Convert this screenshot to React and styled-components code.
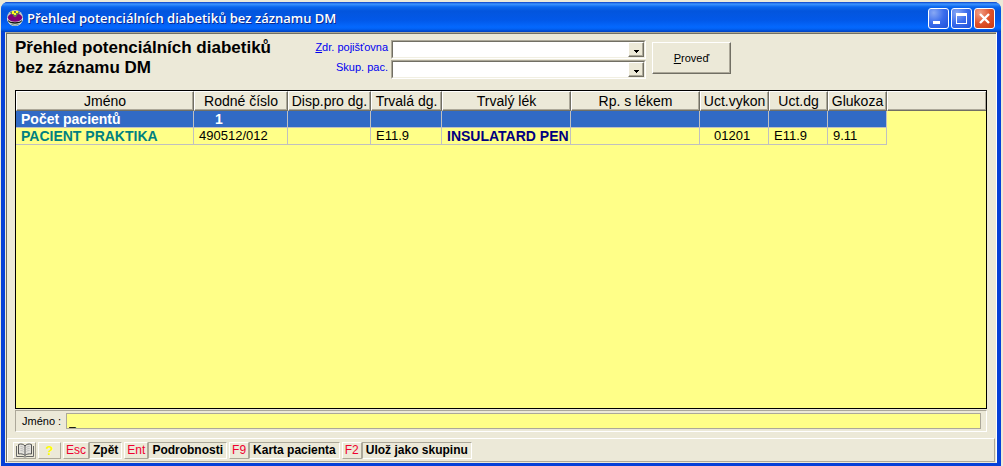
import React, { useState } from "react";
import styled, { createGlobalStyle } from "styled-components";

const columns = [
  { key: "name", label: "Jméno", width: 178 },
  { key: "birthNo", label: "Rodné číslo", width: 94 },
  { key: "disp", label: "Disp.pro dg.", width: 83 },
  { key: "permDg", label: "Trvalá dg.", width: 71 },
  { key: "drug", label: "Trvalý lék", width: 129 },
  { key: "rx", label: "Rp. s lékem", width: 129 },
  { key: "billCode", label: "Uct.vykon", width: 69 },
  { key: "billDg", label: "Uct.dg", width: 59 },
  { key: "glucose", label: "Glukoza", width: 59 },
];

const patients = [
  {
    name: "PACIENT PRAKTIKA",
    birthNo: "490512/012",
    permDg: "E11.9",
    drug: "INSULATARD PEN",
    billCode: "01201",
    billDg: "E11.9",
    glucose: "9.11",
  },
];

const cellColors = { name: "#008080", drug: "#000080" };

const shortcuts = [
  { keyName: "Esc", label: "Zpět" },
  { keyName: "Ent", label: "Podrobnosti" },
  { keyName: "F9", label: "Karta pacienta" },
  { keyName: "F2", label: "Ulož jako skupinu" },
];

function AppIcon() {
  return (
    <svg width="16" height="16" viewBox="0 0 16 16" aria-hidden="true">
      <circle cx="8" cy="8" r="8" fill="#c4ccc8" />
      <path d="M0 8a8 8 0 0 0 16 0z" fill="#e4e8e4" />
      <path d="M1 10c2 3 12 3 14 0v1c-2 3.500-12 3.500-14 0z" fill="#101810" />
      <path d="M3 13.500c3 1.500 7 1.500 10 0l-2 1.500c-2 .8-4 .8-6 0z" fill="#608078" />
      <ellipse cx="8" cy="7.500" rx="7.200" ry="4.300" fill="#800078" />
      <path d="M3 2l3-1h4l3 1-1 2-2 1-1 2H7L6 5 4 4z" fill="#687858" />
      <path d="M5 1h2v2h2V1h2v2H9v2H7V4H5z" fill="#ffff20" />
    </svg>
  );
}

function BookIcon() {
  return (
    <svg width="18" height="15" viewBox="0 0 18 15" fill="none" aria-hidden="true">
      <path d="M2.500 1.500C5 .5 7.500 1 9 3c1.500-2 4-2.500 6.500-1.500V11C13 10.500 10.500 11 9 12.500 7.500 11 5 10.500 2.500 11z" fill="#e4e2dc" stroke="#555" />
      <path d="M9 3v9" stroke="#555" />
      <path d="M4.500 3.500c1 0 2 0 3 1M4.500 5.500c1 0 2 0 3 1M4.500 7.500c1 0 2 0 3 1M13.500 3.500c-1 0-2 0-3 1M13.500 5.500c-1 0-2 0-3 1M13.500 7.500c-1 0-2 0-3 1" stroke="#bbb" />
      <path d="M.5 3v10.500H7l2 .5 2-.5h6.500V3" stroke="#666" />
    </svg>
  );
}

function Combo({ id }) {
  return (
    <ComboBox>
      <ComboSelect id={id}>
        <option value=""></option>
      </ComboSelect>
      <ComboArrow>
        <svg width="5" height="3" viewBox="0 0 5 3" shapeRendering="crispEdges" aria-hidden="true">
          <path d="M0 0h5v1H4v1H3v1H2V2H1V1H0z" fill="#000" />
        </svg>
      </ComboArrow>
    </ComboBox>
  );
}

export default function App() {
  const [search, setSearch] = useState("_");

  return (
    <>
      <GlobalStyle />
      <Window>
        <TitleBar>
          <AppIcon />
          <WindowTitle>Přehled potenciálních diabetiků bez záznamu DM</WindowTitle>
          <WindowButton aria-label="Minimalizovat">
            <svg width="19" height="19" shapeRendering="crispEdges">
              <path d="M4 12h7v3H4z" fill="#fff" />
            </svg>
          </WindowButton>
          <WindowButton aria-label="Maximalizovat">
            <svg width="19" height="19" shapeRendering="crispEdges">
              <path d="M4 4h11v11H4zM5 7v7h9V7z" fill="#fff" fillRule="evenodd" />
            </svg>
          </WindowButton>
          <WindowButton $close aria-label="Zavřít">
            <svg width="19" height="19">
              <path d="M5 5l9 9M14 5l-9 9" stroke="#fff" strokeWidth="2.4" />
            </svg>
          </WindowButton>
        </TitleBar>

        <Client>
          <Filter>
            <Heading>Přehled potenciálních diabetiků bez záznamu DM</Heading>
            <Fields>
              <FieldLabel htmlFor="insurance">
                <u>Z</u>dr. pojišťovna
              </FieldLabel>
              <Combo id="insurance" />
              <FieldLabel htmlFor="group">Skup. pac.</FieldLabel>
              <Combo id="group" />
            </Fields>
            <RunButton>
              <span>
                <u>P</u>roveď
              </span>
            </RunButton>
          </Filter>

          <GridPanel>
            <Table>
              <colgroup>
                {columns.map((col) => (
                  <col key={col.key} style={{ width: col.width }} />
                ))}
                <col />
              </colgroup>
              <thead>
                <tr>
                  {columns.map((col) => (
                    <HeadCell key={col.key}>{col.label}</HeadCell>
                  ))}
                  <HeadCell $filler />
                </tr>
              </thead>
              <tbody>
                <tr>
                  {columns.map((col) => (
                    <Cell key={col.key} $selected $bold $indent={col.key === "birthNo" ? 21 : 5}>
                      {col.key === "name" && "Počet pacientů"}
                      {col.key === "birthNo" && patients.length}
                    </Cell>
                  ))}
                </tr>
                {patients.map((patient) => (
                  <tr key={patient.birthNo}>
                    {columns.map((col) => (
                      <Cell
                        key={col.key}
                        $bold={col.key in cellColors}
                        $color={cellColors[col.key]}
                        $indent={col.key === "billCode" ? 14 : 5}
                      >
                        {patient[col.key]}
                      </Cell>
                    ))}
                  </tr>
                ))}
              </tbody>
            </Table>
          </GridPanel>

          <SearchPanel>
            <label htmlFor="search">Jméno :</label>
            <SearchInput id="search" value={search} onChange={(e) => setSearch(e.target.value)} />
          </SearchPanel>

          <StatusBar>
            <IconButton aria-label="Kniha">
              <BookIcon />
            </IconButton>
            <IconButton aria-label="Nápověda">?</IconButton>
            {shortcuts.map((item) => (
              <Shortcut key={item.keyName}>
                <ShortcutKey>{item.keyName}</ShortcutKey>
                <ShortcutLabel>{item.label}</ShortcutLabel>
              </Shortcut>
            ))}
          </StatusBar>
        </Client>
      </Window>
    </>
  );
}

const GlobalStyle = createGlobalStyle`
  * {
    box-sizing: border-box;
  }

  body {
    margin: 0;
    background: #ece9d8;
    font-family: "Liberation Sans", Arial, sans-serif;
    font-size: 12px;
    color: #000;
  }

  button, input, select {
    font: inherit;
    margin: 0;
  }

  #root {
    display: flex;
    min-height: 100vh;
    padding: 2px 2px 0 1px;
  }
`;

const Window = styled.div`
  flex: 1;
  min-width: 0;
  display: flex;
  flex-direction: column;
  border: solid #0540d8;
  border-width: 0 4px 3px;
  border-radius: 7px 7px 0 0;
  background: #0540d8;
`;

const TitleBar = styled.header`
  display: flex;
  align-items: center;
  gap: 2px;
  height: 30px;
  margin: 0 -4px;
  padding: 2px 6px 0;
  border-radius: 7px 7px 0 0;
  background: linear-gradient(
    #0a3fc8 0,
    #3d95ff 2px,
    #0a66ee 5px,
    #0355dd 9px,
    #0258e8 18px,
    #0468fe 25px,
    #0262f4 27px,
    #0040c0 30px
  );
`;

const WindowTitle = styled.span`
  flex: 1;
  padding-left: 2px;
  font-family: "Open Sans", "Noto Sans", sans-serif;
  font-size: 13px;
  font-weight: 600;
  line-height: 18px;
  white-space: nowrap;
  color: #fff;
  text-shadow: 1px 1px #0a2a90;
`;

const WindowButton = styled.button`
  width: 21px;
  height: 21px;
  padding: 0;
  border: 1px solid #fff;
  border-radius: 3px;
  background: ${({ $close }) =>
    $close
      ? "radial-gradient(circle at 25% 20%, #f0a088, #e0532c 50%, #c83810)"
      : "radial-gradient(circle at 25% 20%, #88a8f4, #3a6cec 50%, #1c50d8)"};

  svg {
    display: block;
  }
`;

const Client = styled.main`
  flex: 1;
  display: flex;
  flex-direction: column;
  background: #ece9d8;
  border: 1px solid;
  border-color: #aca899 #fff #ece9d8 #ece9d8;
  box-shadow: inset 1px 1px #716f64;
`;

const Filter = styled.section`
  display: flex;
  align-items: flex-start;
  padding: 5px 9px 0;
  height: 57px;
`;

const Heading = styled.h1`
  width: 285px;
  margin: 0;
  font-size: 17px;
  font-weight: bold;
  line-height: 20px;
`;

const Fields = styled.div`
  display: grid;
  grid-template-columns: 88px 255px;
  column-gap: 3px;
  row-gap: 1px;
  padding-top: 2px;
`;

const FieldLabel = styled.label`
  font-size: 11px;
  line-height: 15px;
  text-align: right;
  white-space: nowrap;
  color: #0000f0;
`;

const ComboBox = styled.div`
  position: relative;
  display: flex;
  height: 19px;
  border: 1px solid;
  border-color: #aca899 #fff #fff #aca899;
`;

const ComboSelect = styled.select`
  flex: 1;
  appearance: none;
  padding: 0 20px 0 3px;
  border: 1px solid;
  border-color: #716f64 #f1efe2 #f1efe2 #716f64;
  border-radius: 0;
  background: #fff;
`;

const ComboArrow = styled.span`
  position: absolute;
  top: 1px;
  right: 1px;
  bottom: 1px;
  width: 16px;
  display: flex;
  align-items: center;
  justify-content: center;
  padding-top: 3px;
  border: 1px solid;
  border-color: #fff #716f64 #716f64 #fff;
  box-shadow: inset -1px -1px #aca899;
  background: #ece9d8;
  pointer-events: none;
`;

const RunButton = styled.button`
  width: 79px;
  height: 32px;
  margin: 4px 0 0 6px;
  padding: 0;
  border: 1px solid;
  border-color: #fff #716f64 #716f64 #fff;
  box-shadow: inset -1px -1px #aca899;
  background: #ece9d8;
  font-size: 11px;
`;

const GridPanel = styled.section`
  flex: 1;
  margin: 0 9px;
  border: 1px solid #000;
  background: #ffff88;
  overflow: hidden;
`;

const Table = styled.table`
  width: 100%;
  table-layout: fixed;
  border-collapse: separate;
  border-spacing: 0;
`;

const HeadCell = styled.th`
  height: 20px;
  padding: 0;
  border: 1px solid;
  border-color: #fff #716f64 #716f64 #fff;
  ${({ $filler }) => $filler && "border-right: 0;"}
  box-shadow: inset -1px -1px #aca899;
  background: #ece9d8;
  font-size: 14px;
  font-weight: normal;
  line-height: 18px;
  white-space: nowrap;
  overflow: hidden;
`;

const Cell = styled.td`
  height: 17px;
  padding: 0 0 0 ${({ $indent }) => $indent}px;
  border: solid #c0c0c0;
  border-width: 0 1px 1px 0;
  background: ${({ $selected }) => ($selected ? "#316ac5" : "transparent")};
  color: ${({ $selected, $color }) => ($selected ? "#fff" : $color || "#000")};
  font-size: ${({ $bold }) => ($bold ? 14 : 13)}px;
  font-weight: ${({ $bold }) => ($bold ? "bold" : "normal")};
  line-height: 16px;
  white-space: nowrap;
  overflow: hidden;
`;

const SearchPanel = styled.section`
  display: flex;
  align-items: center;
  gap: 5px;
  height: 22px;
  margin: 1px 9px 6px;
  padding: 0 5px 0 6px;
  border: 1px solid;
  border-color: #aca899 #fff #fff #aca899;

  label {
    width: 39px;
    font-size: 11px;
    white-space: nowrap;
  }
`;

const SearchInput = styled.input`
  flex: 1;
  min-width: 0;
  height: 16px;
  padding: 0 2px;
  border: 1px solid #aca899;
  border-radius: 0;
  background: #ffff88;
  font-size: 12px;
  outline: none;
`;

const StatusBar = styled.footer`
  display: flex;
  align-items: center;
  gap: 2px;
  height: 24px;
  margin: 0 1px;
  padding: 0 5px;
  border: 1px solid;
  border-color: #fff #aca899 #aca899 #fff;
`;

const IconButton = styled.button`
  display: flex;
  align-items: center;
  justify-content: center;
  width: 23px;
  height: 17px;
  padding: 0;
  border: 1px solid;
  border-color: #fff #aca899 #aca899 #fff;
  background: #ece9d8;
  color: #ffff00;
  font-size: 13px;
  font-weight: bold;
`;

const Shortcut = styled.button`
  display: flex;
  height: 17px;
  padding: 0;
  border: 0;
  background: #ece9d8;
  font-size: 12px;
  line-height: 15px;
  white-space: nowrap;
`;

const ShortcutKey = styled.span`
  padding: 0 2px;
  border: 1px solid;
  border-color: #fff #aca899 #aca899 #fff;
  color: #f00030;
`;

const ShortcutLabel = styled.span`
  padding: 0 3px;
  border: 1px solid;
  border-color: #aca899 #fff #fff #aca899;
  font-weight: bold;
`;
